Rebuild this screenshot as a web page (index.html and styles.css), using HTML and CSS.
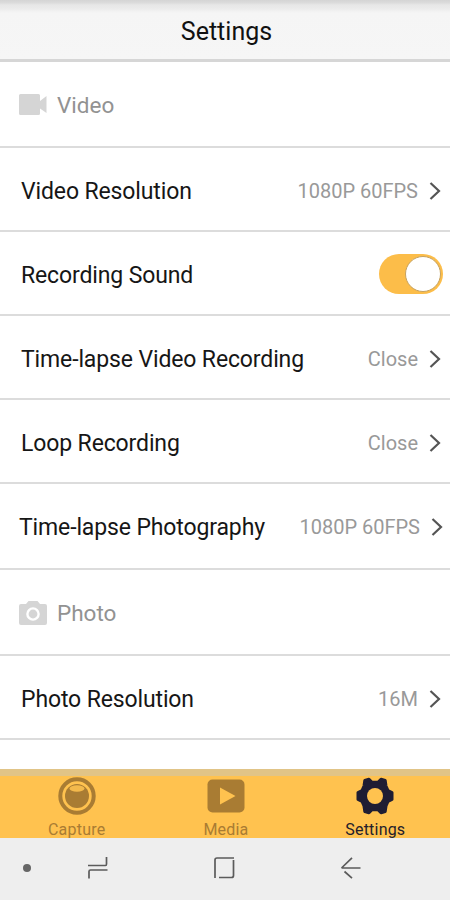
FILE: index.html
```html
<!DOCTYPE html>
<html lang="en">
<head>
<meta charset="utf-8">
<title>Settings</title>
<link rel="stylesheet" href="styles.css">
</head>
<body>
<div class="app">
  <header class="header"><h1 class="title">Settings</h1></header>
  <main class="list">
    <div class="row section">
      <svg class="section-icon" width="28" height="22" viewBox="0 0 28 22"><path d="M1.5 0H19.5Q21 0 21 1.5V7L27.500 2V19L21 14.500V19.5Q21 21 19.5 21H1.5Q0 21 0 19.5V1.5Q0 0 1.5 0Z" fill="#d5d5d5"/></svg>
      <span class="section-name">Video</span>
    </div>
    <div class="row">
      <span class="label">Video Resolution</span><span class="value">1080P 60FPS</span>
      <svg class="chevron" width="12" height="20" viewBox="0 0 12 20"><path d="M1.5 2L10 10L1.5 18"/></svg>
    </div>
    <div class="row">
      <span class="label">Recording Sound</span>
      <span class="toggle"><span class="knob"></span></span>
    </div>
    <div class="row">
      <span class="label">Time-lapse Video Recording</span><span class="value">Close</span>
      <svg class="chevron" width="12" height="20" viewBox="0 0 12 20"><path d="M1.5 2L10 10L1.5 18"/></svg>
    </div>
    <div class="row">
      <span class="label">Loop Recording</span><span class="value">Close</span>
      <svg class="chevron" width="12" height="20" viewBox="0 0 12 20"><path d="M1.5 2L10 10L1.5 18"/></svg>
    </div>
    <div class="row row-photography">
      <span class="label">Time-lapse Photography</span><span class="value">1080P 60FPS</span>
      <svg class="chevron" width="12" height="20" viewBox="0 0 12 20"><path d="M1.5 2L10 10L1.5 18"/></svg>
    </div>
    <div class="row section">
      <svg class="section-icon" width="28" height="24" viewBox="0 0 28 24"><path d="M2 3H7L9.5 0H18.500L21 3H26Q28 3 28 5V22Q28 24 26 24H2Q0 24 0 22V5Q0 3 2 3Z" fill="#d5d5d5"/><circle cx="14" cy="13" r="5.600" fill="none" stroke="#fff" stroke-width="2.400"/></svg>
      <span class="section-name">Photo</span>
    </div>
    <div class="row">
      <span class="label">Photo Resolution</span><span class="value">16M</span>
      <svg class="chevron" width="12" height="20" viewBox="0 0 12 20"><path d="M1.5 2L10 10L1.5 18"/></svg>
    </div>
  </main>
  <nav class="tabs">
    <div class="tab">
      <svg class="tab-icon" width="38" height="38" viewBox="0 0 38 38"><circle cx="19" cy="19" r="16.700" fill="none" stroke="#a97c33" stroke-width="4"/><circle cx="19" cy="19" r="12" fill="#a97c33"/><ellipse cx="19" cy="11.500" rx="7.500" ry="3.300" fill="#f3b94c"/></svg>
      <span class="tab-name">Capture</span>
    </div>
    <div class="tab tab-media">
      <svg class="tab-icon" width="38" height="38" viewBox="0 0 38 38"><rect x=".5" y="2.500" width="37" height="33" rx="5" fill="#a97c33"/><path d="M13 10.500L28.500 19L13 27.500Z" fill="#ffc24f"/></svg>
      <span class="tab-name">Media</span>
    </div>
    <div class="tab tab-active">
      <svg class="tab-icon" width="38" height="38" viewBox="0 0 38 38"><path fill="#1f1d33" stroke="#1f1d33" stroke-width="3" stroke-linejoin="round" d="M8.800 3.500L13 2.200L16 5.200H22L25 2.200L29.200 3.500L30 9L32 13.500L36 15.500V22.500L32 24.500L30 29L29.200 34.500L25 35.800L22 32.800H16L13 35.800L8.800 34.500L8 29L6 24.500L2 22.500V15.500L6 13.500L8 9Z"/><circle cx="19" cy="19" r="8" fill="#ffc24f"/></svg>
      <span class="tab-name">Settings</span>
    </div>
  </nav>
  <footer class="system">
    <span class="dot"></span>
    <svg class="recents" width="20" height="22" viewBox="0 0 20 22"><path d="M0 8.500H17.500Q18.500 8.500 18.500 7V0M19.500 13H2.500Q1 13 1 14.500V21.500"/></svg>
    <svg class="home" width="22" height="22" viewBox="0 0 22 22"><path d="M20 1H3Q1 1 1 3V21M19.500 3V18.500Q19.500 20.500 17.500 20.500H5"/></svg>
    <svg class="back" width="22" height="22" viewBox="0 0 22 22"><path d="M20.500 11H1.500M12 .8L1.500 11M4.500 14.500L12 21.200"/></svg>
  </footer>
</div>
</body>
</html>
```
FILE: styles.css
```css
* { box-sizing: border-box; }
body { margin: 0; background: #fff; font-family: Roboto, sans-serif; }
.app { width: 450px; height: 900px; display: flex; flex-direction: column; overflow: hidden; }
.header {
  height: 62px; flex: none; padding-left: 3px;
  display: flex; align-items: center; justify-content: center;
  border-bottom: 3px solid #d6d6d6;
  background: linear-gradient(#d4d4d4 0, #dcdcdc 3px, #e7e7e7 5px, #eaeaea 8px, #f5f5f5 13px, #f6f6f6 100%);
}
.title { margin: 5px 0 0; font-size: 25px; font-weight: 400; line-height: 30px; color: #111; letter-spacing: 0; }
.list { flex: 1; }
.row {
  height: 84px; padding: 3px 9px 0 21px;
  display: flex; align-items: center;
  border-bottom: 2px solid #dcdcdc;
}
.label { flex: 1; padding-top: 2px; font-size: 23px; line-height: 30px; color: #161616; white-space: nowrap; letter-spacing: -.13px; }
.value { font-size: 20px; line-height: 30px; color: #999; white-space: nowrap; margin-right: 11px; }
.chevron { fill: none; stroke: #555; stroke-width: 2.2; }
.section { height: 86px; padding: 1px 9px 0 19px; }
.section-icon { flex: none; margin-right: 10px; }
.section-name { padding-top: 1px; font-size: 22.5px; line-height: 30px; color: #929292; }
.row-photography { height: 86px; padding: 1px 7px 0 19px; }
.toggle { width: 64px; height: 40px; margin: -1px -2px 0 0; padding: 2px; border-radius: 20px; background: #fcbd49; display: flex; justify-content: flex-end; }
.knob { width: 36px; height: 36px; border-radius: 50%; background: #fff; border: 1px solid #c6a15d; }
.tabs {
  height: 69px; flex: none; padding-left: 2px;
  display: flex; border-top: 7px solid #e1c487; background: #ffc24f;
}
.tab { width: 149.500px; display: flex; flex-direction: column; align-items: center; color: #a97c33; }
.tab-icon { flex: none; margin-top: 1px; }
.tab-name { font-size: 16px; line-height: 20px; margin-top: 5px; letter-spacing: .2px; }
.tab-active { color: #24202b; }
.system { height: 62px; flex: none; padding: 0 88px 3px 23px; display: flex; align-items: center; background: #eee; }
.system svg { fill: none; stroke: #5b5b5b; stroke-width: 1.7; }
.dot { width: 8px; height: 8px; border-radius: 50%; background: #666; }
.recents { margin-left: 57px; }
.home { margin-left: 106px; }
.back { margin-left: auto; }
```
